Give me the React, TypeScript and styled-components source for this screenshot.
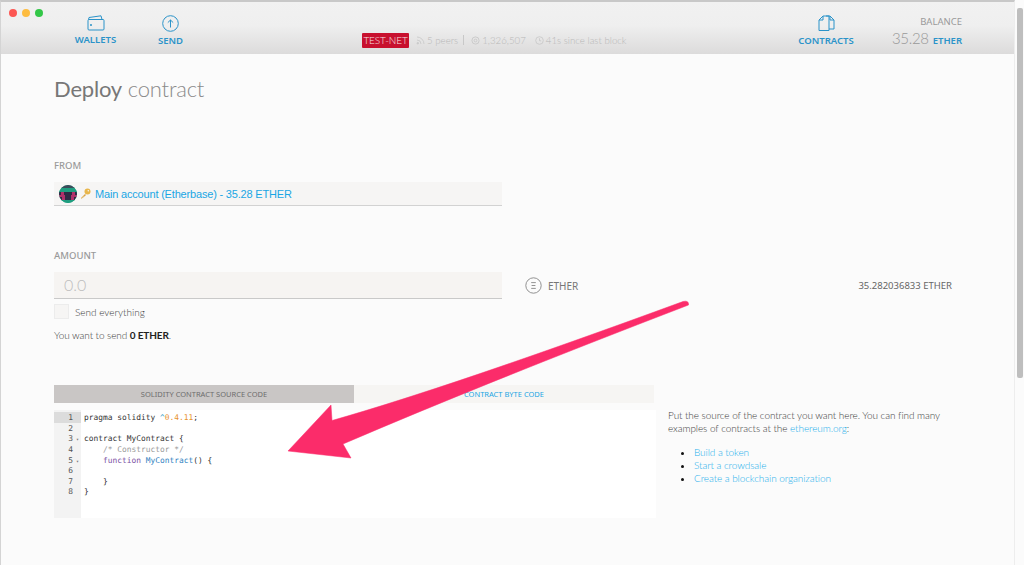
import React from "react"
import styled, { createGlobalStyle } from "styled-components"

const GlobalStyle = createGlobalStyle`
  html, body {
    margin: 0;
    padding: 0;
    background: #fbfbfb;
  }
  body {
    font-family: Lato, "Noto Sans", sans-serif;
    color: #777;
    overflow: hidden;
  }
`

const labelFont = `"Noto Sans", "Open Sans", sans-serif`

const Window = styled.div`
  position: relative;
  width: 1024px;
  height: 565px;
  overflow: hidden;
  background: #fbfbfb;
`

const Frame = styled.div`
  width: 1015px;
  height: 565px;
  box-sizing: border-box;
  border-top: 2px solid #c8c8c8;
  border-left: 1px solid #d4d4d4;
  border-right: 1px solid #ededed;
`

const Header = styled.header`
  display: flex;
  align-items: flex-start;
  height: 52px;
  box-sizing: border-box;
  background: linear-gradient(to bottom, #f1f1f1 0%, #efefef 45%, #dcdbdb 100%);
`

const Lights = styled.div`
  display: flex;
  gap: 5px;
  padding: 7px 0 0 8px;
  width: 50px;
  flex: none;
`

const Light = styled.span<{ $color: string }>`
  width: 8px;
  height: 8px;
  border-radius: 50%;
  background: ${(p) => p.$color};
`

const NavItem = styled.div<{ $width: number }>`
  display: flex;
  flex-direction: column;
  align-items: center;
  width: ${(p) => p.$width}px;
  flex: none;
  padding-top: 13px;
  color: #2b93c9;
`

const NavLabel = styled.span`
  font-family: ${labelFont};
  font-size: 9.5px;
  font-weight: 600;
  line-height: 13px;
  margin-top: 2px;
`

const Status = styled.div`
  display: flex;
  align-items: center;
  height: 16px;
  margin: 30px 0 0 153px;
  font-size: 9.7px;
  font-weight: 300;
  color: #b8b8b8;
  white-space: nowrap;
`

const NetBadge = styled.span`
  background: #c8102e;
  color: #f8e4e6;
  font-size: 10px;
  letter-spacing: -0.1px;
  line-height: 15px;
  width: 47px;
  text-align: center;
  border-radius: 1px;
  margin-right: 7px;
`

const StatusItem = styled.span<{ $gap?: number }>`
  display: inline-flex;
  align-items: center;
  gap: 2px;
  margin-left: ${(p) => p.$gap ?? 0}px;
`

const Divider = styled.span`
  width: 1px;
  height: 10px;
  background: #c8c8c8;
  margin: 0 7px 0 5px;
`

const Spacer = styled.div`
  flex: 1;
`

const Balance = styled.div`
  display: flex;
  flex-direction: column;
  align-items: flex-end;
  width: 68px;
  margin: 0 52px 0 38px;
  padding-top: 13px;
`

const BalanceLabel = styled.span`
  font-family: ${labelFont};
  font-size: 9.5px;
  line-height: 13px;
  color: #9a9a9a;
`

const BalanceValue = styled.span`
  font-size: 15px;
  letter-spacing: -0.3px;
  font-weight: 300;
  line-height: 20px;
  color: #999;
  white-space: nowrap;
`

const BalanceUnit = styled.span`
  font-family: ${labelFont};
  font-size: 9.5px;
  letter-spacing: 0;
  font-weight: 600;
  color: #2b93c9;
  margin-left: 4px;
`

const Main = styled.main`
  padding: 20px 0 0 53px;
`

const Title = styled.h1`
  margin: 0 0 55px;
  font-size: 22px;
  letter-spacing: -0.2px;
  line-height: 30px;
  font-weight: 300;
  color: #8a8a8a;
`

const TitleStrong = styled.span`
  font-weight: 400;
  color: #777;
`

const FieldLabel = styled.div`
  font-family: ${labelFont};
  font-size: 9.5px;
  font-weight: 500;
  line-height: 13px;
  color: #9a9a9a;
`

const FromBox = styled.div`
  display: flex;
  align-items: center;
  width: 448px;
  height: 24px;
  margin: 10px 0 43px;
  padding-left: 5px;
  box-sizing: border-box;
  background: #f6f5f4;
  border-bottom: 1px solid #d2d2d2;
  font-family: "Liberation Sans", Arial, sans-serif;
  font-size: 11px;
  letter-spacing: -0.18px;
  color: #1aa6e4;
  white-space: nowrap;
`

const KeyIcon = styled.svg`
  margin: 0 4px 0 3px;
  flex: none;
`

const AmountRow = styled.div`
  display: flex;
  align-items: center;
  margin-top: 10px;
  width: 898px;
`

const AmountInput = styled.div`
  width: 448px;
  height: 27px;
  box-sizing: border-box;
  padding-left: 10px;
  background: #f6f4f2;
  border-bottom: 1px solid #c9c9c9;
  font-size: 16px;
  font-weight: 300;
  line-height: 26px;
  color: #bdbdbd;
`

const Unit = styled.div`
  display: flex;
  align-items: center;
  gap: 6px;
  margin-left: 23px;
  font-family: ${labelFont};
  font-size: 10px;
  color: #777;
`

const Available = styled.div`
  margin-left: auto;
  font-family: ${labelFont};
  font-size: 9.5px;
  color: #666;
`

const CheckRow = styled.div`
  display: flex;
  align-items: center;
  gap: 6px;
  margin-top: 5px;
  font-size: 10px;
  font-weight: 300;
  color: #3d3d3d;
`

const CheckBox = styled.span`
  width: 15px;
  height: 15px;
  box-sizing: border-box;
  background: #f6f5f4;
  border: 1px solid #ececec;
`

const Summary = styled.p`
  margin: 9px 0 0;
  font-size: 10px;
  letter-spacing: -0.1px;
  line-height: 14px;
  font-weight: 300;
  color: #3d3d3d;

  b {
    font-weight: 700;
    color: #222;
  }
`

const EditorRow = styled.div`
  display: flex;
  margin-top: 43px;
`

const EditorColumn = styled.div`
  width: 602px;
  flex: none;
`

const Tabs = styled.div`
  display: flex;
  width: 600px;
  height: 18px;
`

const Tab = styled.div<{ $active?: boolean }>`
  flex: 1;
  text-align: center;
  font-family: ${labelFont};
  font-size: 7.5px;
  line-height: 18px;
  background: ${(p) => (p.$active ? "#c9c6c5" : "#f6f5f3")};
  color: ${(p) => (p.$active ? "#6d6d6d" : "#1aa6e4")};
`

const Editor = styled.div`
  display: flex;
  height: 108px;
  margin-top: 7px;
  background: #fff;
  font-family: "DejaVu Sans Mono", "Liberation Mono", monospace;
  font-size: 7.9px;
  line-height: 12px;
  color: #333;
`

const Gutter = styled.div`
  width: 27px;
  flex: none;
  padding-top: 2px;
  background: #f3f3f3;
`

const GutterLine = styled.div<{ $active?: boolean }>`
  display: flex;
  justify-content: flex-end;
  padding-right: 8px;
  height: 10.65px;
  position: relative;
  background: ${(p) => (p.$active ? "#dcdcdc" : "transparent")};
  color: #555;
`

const Fold = styled.span`
  position: absolute;
  right: 2px;
  font-size: 5px;
  color: #777;
`

const Code = styled.div`
  padding: 2px 0 0 3px;
`

const CodeLine = styled.div<{ $indent?: boolean }>`
  height: 10.65px;
  padding-left: ${(p) => (p.$indent ? "19px" : "0")};
  white-space: pre;
`

const Token = styled.span<{ $color: string }>`
  color: ${(p) => p.$color};
`

const Help = styled.div`
  width: 290px;
  margin: 24px 0 0 12px;
  font-size: 10px;
  letter-spacing: -0.08px;
  line-height: 13.3px;
  font-weight: 300;
  color: #3d3d3d;

  p {
    margin: 0;
  }
  a {
    color: #1fb0ec;
  }
  ul {
    margin: 10px 0 0;
    padding-left: 26px;
  }
  li::marker {
    color: #111;
  }
`

const ScrollThumb = styled.div`
  position: absolute;
  top: 8px;
  right: 1px;
  width: 6px;
  height: 370px;
  background: #bebebe;
  border-radius: 2px;
`

const ArrowOverlay = styled.svg`
  position: absolute;
  top: 0;
  left: 0;
  pointer-events: none;
`

const WalletIcon = () => (
  <svg width="18" height="16" viewBox="0 0 18 16" fill="none" stroke="#2b93c9" strokeWidth="1">
    <path d="M1 5.5 V14 a1 1 0 0 0 1 1 H16 a1 1 0 0 0 1-1 V5.5 a1 1 0 0 0-1-1 H2 a1 1 0 0 0-1 1 Z" />
    <path d="M1.5 4.5 L2 2.5 L14 0.8 L15 4.5" />
    <circle cx="4" cy="10" r="0.6" fill="#2b93c9" />
  </svg>
)

const SendIcon = () => (
  <svg width="17" height="17" viewBox="0 0 17 17" fill="none" stroke="#2b93c9" strokeWidth="1">
    <circle cx="8.5" cy="8.5" r="7.8" />
    <path d="M8.5 12.5 V5 M5.8 7.6 L8.5 5 L11.2 7.6" />
  </svg>
)

const ContractsIcon = () => (
  <svg width="17" height="17" viewBox="0 0 17 17" fill="none" stroke="#2b93c9" strokeWidth="1">
    <path d="M1 5 L5 1 H11 V15.5 H1 Z M1 5 H5 V1" />
    <path d="M8 1 L12 1 L16 5 V14 H11 M12 1 V5 H16" />
  </svg>
)

const EtherIcon = () => (
  <svg width="17" height="17" viewBox="0 0 17 17" fill="none" stroke="#777" strokeWidth="0.8">
    <circle cx="8.5" cy="8.5" r="7.7" />
    <path d="M6.2 5.6 H10.8 M6.6 8.5 H10.4 M6.2 11.4 H10.8" />
  </svg>
)

const PeersIcon = () => (
  <svg width="9" height="9" viewBox="0 0 9 9" fill="none" stroke="#c8c8c8" strokeWidth="0.8">
    <path d="M1 1 A7 7 0 0 1 8 8 M1 4 A4 4 0 0 1 5 8" />
    <circle cx="1.8" cy="7.2" r="0.8" fill="#c8c8c8" />
  </svg>
)

const LayersIcon = () => (
  <svg width="9" height="9" viewBox="0 0 9 9" fill="none" stroke="#c8c8c8" strokeWidth="0.9">
    <circle cx="4.5" cy="4.5" r="3.6" />
    <circle cx="4.5" cy="4.5" r="1.4" />
  </svg>
)

const ClockIcon = () => (
  <svg width="9" height="9" viewBox="0 0 9 9" fill="none" stroke="#c8c8c8" strokeWidth="0.8">
    <circle cx="4.5" cy="4.5" r="3.8" />
    <path d="M4.5 2.2 V4.8 H6.2" />
  </svg>
)

const Identicon = () => (
  <svg width="18" height="18" viewBox="0 0 18 18" shapeRendering="crispEdges">
    <defs>
      <clipPath id="identicon-clip">
        <circle cx="9" cy="9" r="9" />
      </clipPath>
    </defs>
    <g clipPath="url(#identicon-clip)">
      <rect width="18" height="18" fill="#1f9d7f" />
      <rect y="0" width="18" height="3" fill="#3c4a5a" />
      <rect y="3" width="18" height="4" fill="#1f9d7f" />
      <rect y="7" width="18" height="3" fill="#2f2a45" />
      <rect x="2" y="7" width="3" height="3" fill="#b0306a" />
      <rect x="13" y="7" width="3" height="3" fill="#b0306a" />
      <rect y="10" width="18" height="2" fill="#b0306a" />
      <rect x="6" y="10" width="6" height="2" fill="#2f2a45" />
      <rect y="12" width="18" height="3" fill="#2f2a45" />
      <rect x="3" y="12" width="3" height="3" fill="#b0306a" />
      <rect x="12" y="12" width="3" height="3" fill="#b0306a" />
      <rect y="15" width="18" height="3" fill="#1f9d7f" />
    </g>
  </svg>
)

const Key = () => (
  <KeyIcon width="11" height="11" viewBox="0 0 11 11">
    <path d="M1 10 L5 6 L6 7 L4.5 8.5 L3.5 8.5 L3.5 9.5 L2.5 9.5 L2 10.5 L1 10.5 Z" fill="#d9a441" />
    <circle cx="7.5" cy="3.5" r="3" fill="#e8b64c" />
    <circle cx="8.3" cy="2.7" r="0.8" fill="#f6f5f4" />
  </KeyIcon>
)

const gutterLines = [
  { n: 1, active: true },
  { n: 2 },
  { n: 3, fold: true },
  { n: 4 },
  { n: 5, fold: true },
  { n: 6 },
  { n: 7 },
  { n: 8 },
]

const App = () => {
  return (
    <Window>
      <GlobalStyle />
      <Frame>
        <Header>
          <Lights>
            <Light $color="#fc5753" />
            <Light $color="#fdbc40" />
            <Light $color="#33c748" />
          </Lights>
          <NavItem $width={73}>
            <WalletIcon />
            <NavLabel>WALLETS</NavLabel>
          </NavItem>
          <NavItem $width={77}>
            <SendIcon />
            <NavLabel>SEND</NavLabel>
          </NavItem>
          <Status>
            <NetBadge>TEST-NET</NetBadge>
            <StatusItem>
              <PeersIcon /> 5 peers
            </StatusItem>
            <Divider />
            <StatusItem>
              <LayersIcon /> 1,326,507
            </StatusItem>
            <StatusItem $gap={9}>
              <ClockIcon /> 41s since last block
            </StatusItem>
          </Status>
          <Spacer />
          <NavItem $width={60}>
            <ContractsIcon />
            <NavLabel>CONTRACTS</NavLabel>
          </NavItem>
          <Balance>
            <BalanceLabel>BALANCE</BalanceLabel>
            <BalanceValue>
              35.28<BalanceUnit>ETHER</BalanceUnit>
            </BalanceValue>
          </Balance>
        </Header>
        <Main>
          <Title>
            <TitleStrong>Deploy</TitleStrong> contract
          </Title>
          <FieldLabel>FROM</FieldLabel>
          <FromBox>
            <Identicon />
            <Key />
            Main account (Etherbase) - 35.28 ETHER
          </FromBox>
          <FieldLabel>AMOUNT</FieldLabel>
          <AmountRow>
            <AmountInput>0.0</AmountInput>
            <Unit>
              <EtherIcon />
              ETHER
            </Unit>
            <Available>35.282036833 ETHER</Available>
          </AmountRow>
          <CheckRow>
            <CheckBox />
            Send everything
          </CheckRow>
          <Summary>
            You want to send <b>0 ETHER</b>.
          </Summary>
          <EditorRow>
            <EditorColumn>
              <Tabs>
                <Tab $active>SOLIDITY CONTRACT SOURCE CODE</Tab>
                <Tab>CONTRACT BYTE CODE</Tab>
              </Tabs>
              <Editor>
                <Gutter>
                  {gutterLines.map((line) => (
                    <GutterLine key={line.n} $active={line.active}>
                      {line.n}
                      {line.fold && <Fold>▾</Fold>}
                    </GutterLine>
                  ))}
                </Gutter>
                <Code>
                  <CodeLine>
                    pragma solidity <Token $color="#3aa0c8">^</Token>
                    <Token $color="#e8912d">0.4.11</Token>;
                  </CodeLine>
                  <CodeLine />
                  <CodeLine>contract MyContract {"{"}</CodeLine>
                  <CodeLine $indent>
                    <Token $color="#999">{"/* Constructor */"}</Token>
                  </CodeLine>
                  <CodeLine $indent>
                    <Token $color="#7a4fa3">function</Token> <Token $color="#2f7fc1">MyContract</Token>() {"{"}
                  </CodeLine>
                  <CodeLine />
                  <CodeLine $indent>{"}"}</CodeLine>
                  <CodeLine>{"}"}</CodeLine>
                </Code>
              </Editor>
            </EditorColumn>
            <Help>
              <p>
                Put the source of the contract you want here. You can find many examples of contracts at the{" "}
                <a>ethereum.org</a>:
              </p>
              <ul>
                <li>
                  <a>Build a token</a>
                </li>
                <li>
                  <a>Start a crowdsale</a>
                </li>
                <li>
                  <a>Create a blockchain organization</a>
                </li>
              </ul>
            </Help>
          </EditorRow>
        </Main>
      </Frame>
      <ScrollThumb />
      <ArrowOverlay width="1024" height="565" viewBox="0 0 1024 565">
        <path
          d="M288 451 L331 405 L332 420.5 Q450 387 683 301.5 Q689 300 688.5 305 Q480 385 343 444 L351 458 Z"
          fill="#fb2c6a"
          stroke="#fb2c6a"
          strokeWidth="0.5"
          strokeLinejoin="round"
        />
      </ArrowOverlay>
    </Window>
  )
}

export default App
